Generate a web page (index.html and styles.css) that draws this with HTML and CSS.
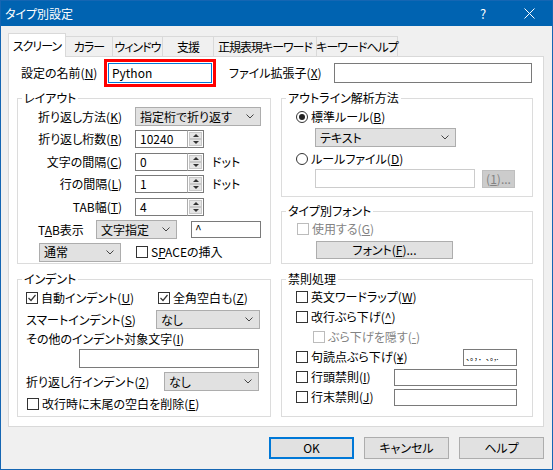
FILE: index.html
```html
<!DOCTYPE html>
<html lang="ja">
<head>
<meta charset="utf-8">
<title>タイプ別設定</title>
<link rel="stylesheet" href="styles.css">
</head>
<body>
<div class="window">
  <div class="titlebar">
    <span class="title">タイプ別設定</span>
    <span class="tb-btn">?</span>
    <span class="tb-btn"><svg width="11" height="11" viewBox="0 0 11 11"><path d="M0.5 0.5L10.5 10.5M10.5 0.5L0.5 10.5" stroke="#fff" stroke-width="1" fill="none"/></svg></span>
  </div>
  <div class="content">
    <div class="tabs">
      <div class="tab active w1">スクリーン</div>
      <div class="tab w2">カラー</div>
      <div class="tab w3">ウィンドウ</div>
      <div class="tab w4">支援</div>
      <div class="tab w5">正規表現キーワード</div>
      <div class="tab w6">キーワードヘルプ</div>
    </div>
    <div class="panel">
      <div class="name-row">
        <span class="name-label">設定の名前(<u>N</u>)</span>
        <div class="input name-input">Python</div>
        <span class="ext-label">ファイル拡張子(<u>X</u>)</span>
        <div class="input ext-input"></div>
      </div>
      <div class="columns">
        <div class="col col-left">
          <fieldset class="grp g-layout">
            <legend>レイアウト</legend>
            <div class="layout-grid">
              <span class="lbl">折り返し方法(<u>K</u>)</span>
              <div class="select s-wrap"><span>指定桁で折り返す</span><svg class="chev" width="8" height="5" viewBox="0 0 8 5"><path d="M0.5 0.5L4 4L7.5 0.5" stroke="#444" fill="none"/></svg></div>
              <span class="lbl">折り返し桁数(<u>R</u>)</span>
              <div class="spin-line"><div class="spin"><div class="spin-input">10240</div><div class="spin-btns"><span class="up"></span><span class="down"></span></div></div></div>
              <span class="lbl">文字の間隔(<u>C</u>)</span>
              <div class="spin-line"><div class="spin"><div class="spin-input">0</div><div class="spin-btns"><span class="up"></span><span class="down"></span></div></div><span class="unit">ドット</span></div>
              <span class="lbl">行の間隔(<u>L</u>)</span>
              <div class="spin-line"><div class="spin"><div class="spin-input">1</div><div class="spin-btns"><span class="up"></span><span class="down"></span></div></div><span class="unit">ドット</span></div>
              <span class="lbl">TAB幅(<u>T</u>)</span>
              <div class="spin-line"><div class="spin"><div class="spin-input">4</div><div class="spin-btns"><span class="up"></span><span class="down"></span></div></div></div>
            </div>
            <div class="tab-row">
              <span class="tab-lbl">T<u>A</u>B表示</span>
              <div class="select s-tabdisp"><span>文字指定</span><svg class="chev" width="8" height="5" viewBox="0 0 8 5"><path d="M0.5 0.5L4 4L7.5 0.5" stroke="#444" fill="none"/></svg></div>
              <div class="input tab-char">^</div>
            </div>
            <div class="space-row">
              <div class="select s-normal"><span>通常</span><svg class="chev" width="8" height="5" viewBox="0 0 8 5"><path d="M0.5 0.5L4 4L7.5 0.5" stroke="#444" fill="none"/></svg></div>
              <span class="chk sp-chk"></span><span class="chk-text">S<u>P</u>ACEの挿入</span>
            </div>
          </fieldset>
          <fieldset class="grp g-indent">
            <legend>インデント</legend>
            <div class="irow ir1">
              <div class="auto-item"><span class="chk on"><svg width="10" height="10" viewBox="0 0 10 10"><path d="M1.5 5L4 7.5L8.5 2" stroke="#333" stroke-width="1.2" fill="none"/></svg></span><span class="chk-text">自動インデント(<u>U</u>)</span></div>
              <span class="chk on"><svg width="10" height="10" viewBox="0 0 10 10"><path d="M1.5 5L4 7.5L8.5 2" stroke="#333" stroke-width="1.2" fill="none"/></svg></span><span class="chk-text">全角空白も(<u>Z</u>)</span>
            </div>
            <div class="irow ir2">
              <span>スマートインデント(<u>S</u>)</span>
              <div class="select s-smart"><span>なし</span><svg class="chev" width="8" height="5" viewBox="0 0 8 5"><path d="M0.5 0.5L4 4L7.5 0.5" stroke="#444" fill="none"/></svg></div>
            </div>
            <div class="irow ir3"><span>その他のインデント対象文字(<u>I</u>)</span></div>
            <div class="irow ir4"><div class="input other-input"></div></div>
            <div class="irow ir5">
              <span>折り返し行インデント(<u>2</u>)</span>
              <div class="select s-wrapind"><span>なし</span><svg class="chev" width="8" height="5" viewBox="0 0 8 5"><path d="M0.5 0.5L4 4L7.5 0.5" stroke="#444" fill="none"/></svg></div>
            </div>
            <div class="irow ir6"><span class="chk"></span><span class="chk-text">改行時に末尾の空白を削除(<u>E</u>)</span></div>
          </fieldset>
        </div>
        <div class="col col-right">
          <fieldset class="grp g-outline">
            <legend>アウトライン解析方法</legend>
            <div class="orow or1"><span class="radio on"></span><span class="chk-text">標準ルール(<u>B</u>)</span></div>
            <div class="orow or2"><div class="select s-text"><span>テキスト</span><svg class="chev" width="8" height="5" viewBox="0 0 8 5"><path d="M0.5 0.5L4 4L7.5 0.5" stroke="#444" fill="none"/></svg></div></div>
            <div class="orow or3"><span class="radio"></span><span class="chk-text">ルールファイル(<u>D</u>)</span></div>
            <div class="orow or4"><div class="input file-input dis"></div><div class="btn dis-btn">(<u>1</u>)...</div></div>
          </fieldset>
          <fieldset class="grp g-font">
            <legend>タイプ別フォント</legend>
            <div class="frow fr1"><span class="chk dis-chk"></span><span class="chk-text gray">使用する(<u>G</u>)</span></div>
            <div class="frow fr2"><div class="btn font-btn">フォント(<u>F</u>)...</div></div>
          </fieldset>
          <fieldset class="grp g-kinsoku">
            <legend>禁則処理</legend>
            <div class="krow"><span class="chk"></span><span class="chk-text">英文ワードラップ(<u>W</u>)</span></div>
            <div class="krow"><span class="chk"></span><span class="chk-text">改行ぶら下げ(<u>^</u>)</span></div>
            <div class="krow kind"><span class="chk dis-chk"></span><span class="chk-text gray">ぶら下げを隠す(<u>-</u>)</span></div>
            <div class="krow"><span class="chk"></span><span class="chk-text">句読点ぶら下げ(<u>¥</u>)</span><div class="input punct">、。，．､｡,.</div></div>
            <div class="krow"><span class="chk"></span><span class="chk-text">行頭禁則(<u>I</u>)</span><div class="input kin-input"></div></div>
            <div class="krow"><span class="chk"></span><span class="chk-text">行末禁則(<u>J</u>)</span><div class="input kin-input"></div></div>
          </fieldset>
        </div>
      </div>
    </div>
    <div class="buttons">
      <div class="btn dlg-btn default">OK</div>
      <div class="btn dlg-btn">キャンセル</div>
      <div class="btn dlg-btn">ヘルプ</div>
    </div>
  </div>
</div>
</body>
</html>
```
FILE: styles.css
```css
* { box-sizing: border-box; }
html, body { margin: 0; padding: 0; }
body {
  width: 553px;
  height: 470px;
  overflow: hidden;
  font-family: "Noto Sans CJK JP", "Noto Sans", sans-serif;
  font-size: 12px;
  line-height: 14px;
  color: #000;
  font-feature-settings: "palt";
  background: #f0f0f0;
}
u { text-decoration: underline; text-underline-offset: 1px; }

.window {
  width: 553px;
  height: 470px;
  border: 1px solid #1566b3;
  background: #f0f0f0;
  display: flex;
  flex-direction: column;
}
.titlebar {
  height: 25px;
  flex-shrink: 0;
  background: #0063b1;
  color: #fff;
  display: flex;
  align-items: center;
}
.title { flex: 1; padding-left: 4px; }
.tb-btn {
  width: 46px;
  height: 25px;
  display: flex;
  align-items: center;
  justify-content: center;
  font-size: 13px;
}

.content { padding: 7px 8px 0 7px; }

.tabs {
  display: flex;
  align-items: flex-end;
  height: 23px;
}
.tab {
  height: 20px;
  border: 1px solid #d9d9d9;
  border-bottom: none;
  margin-left: -1px;
  background: #f0f0f0;
  display: flex;
  align-items: center;
  justify-content: center;
  white-space: nowrap;
  letter-spacing: -1px;
}
.tab.active {
  margin-left: 0;
  height: 24px;
  margin-bottom: -1px;
  background: #fff;
  position: relative;
  z-index: 2;
}
.w1 { width: 58px; }
.w2 { width: 48px; }
.w3 { width: 51px; }
.w4 { width: 52px; }
.w5 { width: 104px; }
.w6 { width: 82px; }

.panel {
  width: 536px;
  height: 371px;
  border: 1px solid #d9d9d9;
  background: #fff;
  padding: 6px 0 0 8px;
}

.name-row { display: flex; align-items: center; height: 20px; }
.name-label { width: 91px; padding-left: 4px; white-space: nowrap; }
.ext-label { width: 105px; margin-left: 17px; white-space: nowrap; }

.input {
  height: 19px;
  border: 1px solid #7a7a7a;
  background: #fff;
  padding: 0 3px;
  display: flex;
  align-items: center;
  white-space: nowrap;
  overflow: hidden;
}
.name-input {
  width: 104px;
  height: 20px;
  border-color: #0078d7;
  outline: 3px solid #ff0000;
  outline-offset: 1px;
}
.ext-input { width: 198px; height: 20px; }

.columns { display: flex; gap: 10px; margin-top: 8px; }
.col { display: flex; flex-direction: column; }
.col-left { width: 254px; gap: 8px; }
.col-right { width: 252px; }

fieldset.grp {
  margin: 0;
  padding: 0;
  border: 1px solid #dcdcdc;
  min-width: 0;
}
legend {
  padding: 0 2px;
  margin-left: 4px;
  line-height: 14px;
}
.g-layout { height: 173px; }
.g-indent { height: 145px; }
.g-outline { height: 106px; }
.g-font { height: 60px; margin-top: 7px !important; }
.g-kinsoku { height: 145px; margin-top: 8px !important; }

.select {
  height: 19px;
  border: 1px solid #adadad;
  background: #e1e1e1;
  display: flex;
  align-items: center;
  justify-content: space-between;
  padding: 0 6px 0 4px;
  white-space: nowrap;
}
.chev { flex-shrink: 0; }

/* layout group */
.layout-grid {
  display: grid;
  grid-template-columns: 104px 1fr;
  grid-auto-rows: 19px;
  column-gap: 13px;
  row-gap: 3.67px;
  margin-top: 2px;
}
.lbl { text-align: right; align-self: center; white-space: nowrap; }
.s-wrap { width: 126px; }
.spin-line { display: flex; align-items: center; }
.spin { display: flex; width: 69px; height: 18px; }
.spin-input {
  flex: 1;
  border: 1px solid #7a7a7a;
  border-right: none;
  background: #fff;
  padding: 0 4px;
  display: flex;
  align-items: center;
}
.spin-btns {
  width: 17px;
  border: 1px solid #7a7a7a;
  border-left: 1px solid #adadad;
  background: #fff;
  display: flex;
  flex-direction: column;
  padding: 1px;
  gap: 0;
}
.spin-btns .up, .spin-btns .down {
  flex: 1;
  background: #e5e5e5;
  border: 1px solid #c8c8c8;
  display: flex;
  align-items: center;
  justify-content: center;
}
.spin-btns .up::before {
  content: "";
  border-left: 3px solid transparent;
  border-right: 3px solid transparent;
  border-bottom: 3px solid #333;
}
.spin-btns .down::before {
  content: "";
  border-left: 3px solid transparent;
  border-right: 3px solid transparent;
  border-top: 3px solid #333;
}
.unit { margin-left: 8px; }

.tab-row { display: flex; align-items: center; height: 19px; margin-top: 3.67px; padding-left: 20px; }
.tab-lbl { width: 58px; white-space: nowrap; }
.s-tabdisp { width: 81px; }
.tab-char { width: 70px; height: 17px; margin-left: 14px; align-items: flex-start; line-height: 12px; padding-top: 1px; }
.space-row { display: flex; align-items: center; height: 19px; margin-top: 3.67px; padding-left: 21px; }
.s-normal { width: 82px; }
.sp-chk { margin-left: 15px; }

.chk {
  width: 12px;
  height: 12px;
  border: 1px solid #333;
  background: #fff;
  flex-shrink: 0;
  display: inline-flex;
  align-items: center;
  justify-content: center;
}
.chk.dis-chk { border-color: #bcbcbc; }
.chk-text { margin-left: 3px; white-space: nowrap; }
.gray { color: #838383; }
.radio {
  width: 12px;
  height: 12px;
  border: 1px solid #333;
  border-radius: 50%;
  background: #fff;
  flex-shrink: 0;
  display: inline-flex;
  align-items: center;
  justify-content: center;
}
.radio.on::before {
  content: "";
  width: 6px;
  height: 6px;
  border-radius: 50%;
  background: #222;
}

/* indent group */
.irow { display: flex; align-items: center; height: 19px; padding-left: 8px; white-space: nowrap; }
.ir1 { margin-top: 2px; }
.ir2 { margin-top: 3px; }
.ir4 { margin-top: 1px; }
.ir5 { margin-top: 4px; }
.ir6 { margin-top: 3px; padding-left: 9px; }
.auto-item { width: 132px; display: flex; align-items: center; }
.s-smart { width: 104px; margin-left: auto; margin-right: 10px; }
.other-input { width: 180px; margin-left: auto; margin-right: 11px; }
.s-wrapind { width: 95px; margin-left: auto; margin-right: 11px; }

/* outline group */
.orow { display: flex; align-items: center; height: 19px; padding-left: 14px; }
.or1 { margin-top: 2px; }
.or2 { margin-top: 2px; padding-left: 33px; }
.or3 { margin-top: 2px; }
.or4 { margin-top: 1px; padding-left: 33px; }
.s-text { width: 141px; }
.file-input.dis { width: 160px; border-color: #cccccc; }
.btn {
  border: 1px solid #adadad;
  background: #e1e1e1;
  display: flex;
  align-items: center;
  justify-content: center;
  white-space: nowrap;
}
.dis-btn {
  width: 33px;
  height: 18px;
  margin-left: 7px;
  background: #cccccc;
  border-color: #bfbfbf;
  color: #838383;
}

/* font group */
.frow { display: flex; align-items: center; padding-left: 15px; }
.fr1 { height: 19px; margin-top: 1px; }
.fr2 { height: 18px; margin-top: 3px; padding-left: 34px; }
.font-btn { width: 137px; height: 18px; }

/* kinsoku group */
.g-kinsoku .krow:first-of-type { margin-top: 1px; }
.krow { display: flex; align-items: center; height: 20px; padding-left: 14px; }
.krow.kind { padding-left: 31px; }
.punct {
  width: 54px;
  height: 17px;
  margin-left: auto;
  margin-right: 15px;
  font-size: 8px;
  padding: 0 2px;
  font-feature-settings: normal;
}
.kin-input { width: 123px; height: 17px; margin-left: auto; margin-right: 15px; }

.buttons {
  display: flex;
  justify-content: flex-end;
  gap: 10px;
  margin-top: 10px;
}
.dlg-btn { width: 85px; height: 22px; }
.dlg-btn.default { border: 2px solid #0078d7; }
```
